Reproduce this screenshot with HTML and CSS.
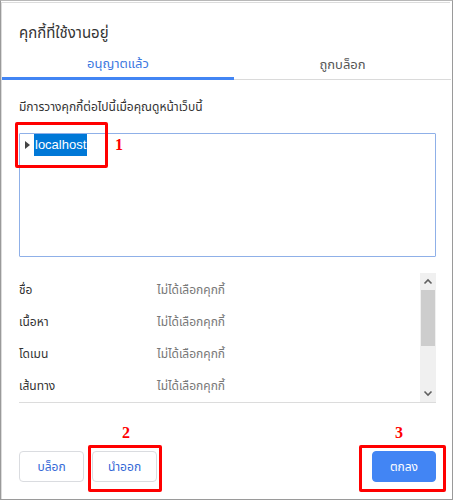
FILE: index.html
```html
<!DOCTYPE html>
<html lang="th">
<head>
<meta charset="utf-8">
<link rel="stylesheet" href="styles.css">
</head>
<body>
<div class="window">
  <div class="dialog">
    <h1 class="title">คุกกี้ที่ใช้งานอยู่</h1>
    <div class="tabs">
      <div class="tab active">อนุญาตแล้ว</div>
      <div class="tab">ถูกบล็อก</div>
    </div>
    <div class="body">
      <p class="desc">มีการวางคุกกี้ต่อไปนี้เมื่อคุณดูหน้าเว็บนี้</p>
      <div class="tree">
        <div class="node">
          <span class="arrow"></span>
          <span class="host">localhost</span>
        </div>
      </div>
      <div class="details">
        <div class="rows">
          <div class="row"><span class="label">ชื่อ</span><span class="value">ไม่ได้เลือกคุกกี้</span></div>
          <div class="row"><span class="label">เนื้อหา</span><span class="value">ไม่ได้เลือกคุกกี้</span></div>
          <div class="row"><span class="label">โดเมน</span><span class="value">ไม่ได้เลือกคุกกี้</span></div>
          <div class="row"><span class="label">เส้นทาง</span><span class="value">ไม่ได้เลือกคุกกี้</span></div>
        </div>
        <div class="scrollbar">
          <svg class="sb-arrow" width="16" height="14" viewBox="0 0 16 14"><path d="M4.5 9 L8 5.5 L11.5 9" fill="none" stroke="#606060" stroke-width="1.6"/></svg>
          <div class="sb-track"><div class="sb-thumb"></div></div>
          <svg class="sb-arrow" width="16" height="14" viewBox="0 0 16 14"><path d="M4.5 5 L8 8.5 L11.5 5" fill="none" stroke="#606060" stroke-width="1.6"/></svg>
        </div>
      </div>
    </div>
    <div class="buttons">
      <button class="btn">บล็อก</button>
      <button class="btn">นำออก</button>
      <span class="spacer"></span>
      <button class="btn primary">ตกลง</button>
    </div>
  </div>

  <div class="mark mark1"></div>
  <div class="num num1">1</div>
  <div class="mark mark2"></div>
  <div class="num num2">2</div>
  <div class="mark mark3"></div>
  <div class="num num3">3</div>
</div>
</body>
</html>
```

FILE: styles.css
```css
* { box-sizing: border-box; }
html, body { margin: 0; padding: 0; background: #fff; }
body {
  font-family: "Noto Sans", "Noto Sans Thai", sans-serif;
  color: #333;
}
.window {
  position: relative;
  width: 453px;
  height: 500px;
  border-top: 1px solid #b8b8b8;
  border-left: 1px solid #9a9a9a;
  border-right: 1px solid #9a9a9a;
  border-bottom: 1px solid #9a9a9a;
  background: #fff;
  overflow: hidden;
}
.dialog {
  height: 100%;
  margin: 2px 1px 1px 1px;
  background: #fff;
  box-shadow: -1px -1px 0 #dcdcdc;
  display: flex;
  flex-direction: column;
}
.title {
  margin: 0;
  padding: 18px 0 0 17px;
  height: 47px;
  font-size: 15px;
  font-weight: normal;
  line-height: 22px;
  color: #333;
}
.tabs {
  display: flex;
  height: 30px;
}
.tab {
  flex: 1;
  text-align: center;
  font-size: 13px;
  line-height: 29px;
  color: #555;
  border-bottom: 1px solid #dadada;
}
.tab.active {
  flex: none;
  width: 232px;
  color: #3c78e0;
  line-height: 27px;
  border-bottom: 3px solid #4285f4;
}
.body {
  padding: 0 15px 0 17px;
}
.desc {
  margin: 18px 0 0 0;
  font-size: 12px;
  line-height: 18px;
  color: #333;
}
.tree {
  margin-top: 17px;
  height: 124px;
  border: 1px solid #8fb0e8;
  border-radius: 1px;
  padding: 0 0 0 5px;
}
.node {
  display: flex;
  align-items: center;
  height: 22px;
}
.arrow {
  width: 0;
  height: 0;
  border-top: 4px solid transparent;
  border-bottom: 4px solid transparent;
  border-left: 5px solid #444;
  margin-right: 4px;
}
.host {
  background: #0078d7;
  color: #fff;
  font-size: 13px;
  line-height: 22px;
  padding: 0 1px;
  font-family: "Liberation Sans", "Noto Sans", sans-serif;
}
.details {
  margin-top: 16px;
  height: 130px;
  display: flex;
  border-bottom: 1px solid #dcdcdc;
}
.rows {
  flex: 1;
  padding-top: 1px;
}
.row {
  display: flex;
  height: 32px;
  align-items: center;
  font-size: 12px;
}
.label { width: 138px; color: #333; }
.value { color: #777; }
.scrollbar {
  width: 16px;
  background: #f0f0f0;
  display: flex;
  flex-direction: column;
}
.sb-arrow { display: block; flex: none; height: 17px; }
.sb-track { flex: 1; }
.sb-thumb {
  margin: 0 1px;
  height: 56px;
  background: #cdcdcd;
}
.buttons {
  display: flex;
  gap: 8px;
  padding: 48px 15px 0 17px;
}
.spacer { flex: 1; }
.btn {
  width: 65px;
  height: 31px;
  border: 1px solid #dadce0;
  border-radius: 4px;
  background: #fff;
  color: #3367d6;
  font-family: "Noto Sans", "Noto Sans Thai", sans-serif;
  font-size: 12px;
  padding: 0;
}
.btn.primary {
  width: 64px;
  background: #4285f4;
  border-color: #4285f4;
  color: #fff;
}
.mark {
  position: absolute;
  border: 3px solid #ff0000;
  border-radius: 2px;
}
.mark1 { left: 14px; top: 121px; width: 93px; height: 46px; }
.mark2 { left: 87px; top: 444px; width: 74px; height: 47px; }
.mark3 { left: 358px; top: 444px; width: 87px; height: 47px; }
.num {
  position: absolute;
  color: #ff0000;
  font-family: "Liberation Serif", serif;
  font-weight: bold;
  font-size: 16px;
  line-height: 16px;
}
.num1 { left: 114px; top: 136px; }
.num2 { left: 121px; top: 424px; }
.num3 { left: 394px; top: 424px; }
```
